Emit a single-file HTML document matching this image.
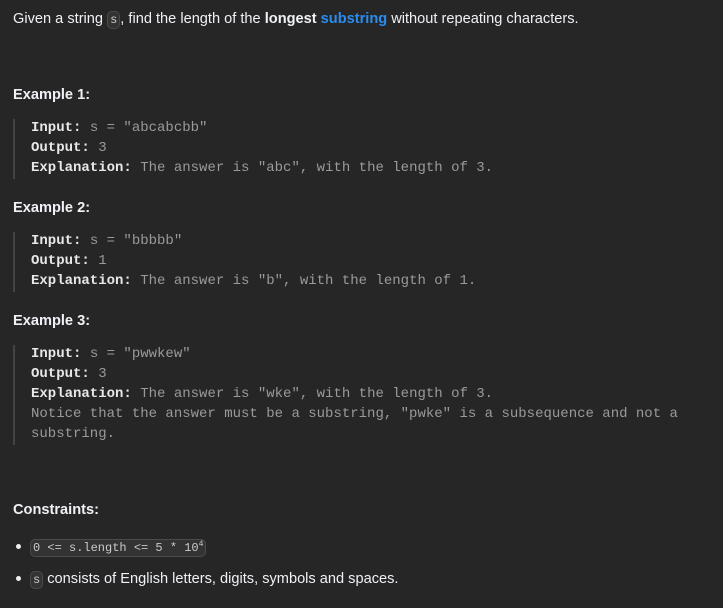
<!DOCTYPE html>
<html><head><style>
body{margin:0;width:723px;height:608px;background:#262626;overflow:hidden;font-family:"Liberation Sans",sans-serif;color:#eff1f6;font-size:14.6px}
.a{position:absolute;white-space:pre;line-height:20px}
.h{font-weight:bold}
.m{font-family:"Liberation Mono",monospace;font-size:14px;color:#9a9a9a}
.m b{color:#e8e8e8}
.bar{position:absolute;left:13px;width:2px;background:#444}
code{font-family:"Liberation Mono",monospace;font-size:12px;background:#333;border:1px solid #4a4a4a;border-radius:5px;padding:1px 2px;color:#c9c9c9}
.blue{color:#2a8cf0;font-weight:bold}
.dot{position:absolute;left:16px;width:5px;height:5px;border-radius:50%;background:#eee}
</style></head><body>
<div class="a" style="left:13px;top:9px">Given a string <code>s</code>, find the length of the <b>longest</b> <span class="blue">substring</span> without repeating characters.</div>
<div class="a h" style="left:13px;top:85px">Example 1:</div>
<div class="bar" style="top:119px;height:60px"></div>
<div class="a m" style="left:31px;top:118px"><b>Input:</b> s = "abcabcbb"
<b>Output:</b> 3
<b>Explanation:</b> The answer is "abc", with the length of 3.</div>
<div class="a h" style="left:13px;top:198px">Example 2:</div>
<div class="bar" style="top:232px;height:60px"></div>
<div class="a m" style="left:31px;top:231px"><b>Input:</b> s = "bbbbb"
<b>Output:</b> 1
<b>Explanation:</b> The answer is "b", with the length of 1.</div>
<div class="a h" style="left:13px;top:311px">Example 3:</div>
<div class="bar" style="top:345px;height:100px"></div>
<div class="a m" style="left:31px;top:344px"><b>Input:</b> s = "pwwkew"
<b>Output:</b> 3
<b>Explanation:</b> The answer is "wke", with the length of 3.
Notice that the answer must be a substring, "pwke" is a subsequence and not a
substring.</div>
<div class="a h" style="left:13px;top:500px">Constraints:</div>
<div class="dot" style="top:544px"></div>
<div class="a" style="left:30px;top:535px"><code>0 &lt;= s.length &lt;= 5 * 10<sup style="font-size:8px">4</sup></code></div>
<div class="dot" style="top:576px"></div>
<div class="a" style="left:30px;top:569px"><code>s</code> consists of English letters, digits, symbols and spaces.</div>
</body></html>
